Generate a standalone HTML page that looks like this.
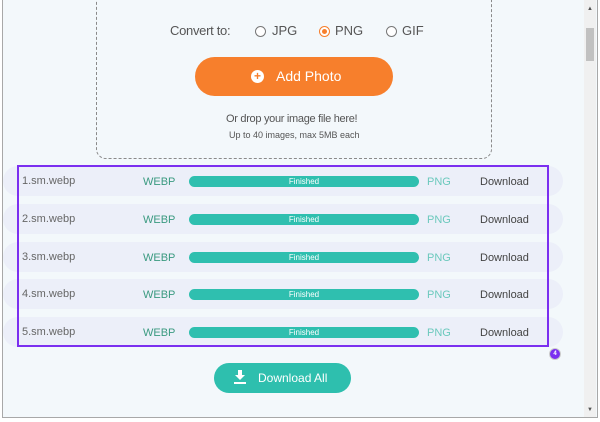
<!DOCTYPE html><html><head><style>
body{margin:0;width:600px;height:422px;background:#fff;font-family:"Liberation Sans",sans-serif;overflow:hidden;position:relative}
.frame{position:absolute;left:2px;top:0;width:594px;height:417px;border:1px solid #a8a8a8;border-top:none;background:#f3f8fb}
.sb{position:absolute;left:584px;top:0;width:12px;height:417px;background:#f0f0f0}
.thumb{position:absolute;left:586px;top:28px;width:8px;height:33px;background:#c1c1c1}
.drop{position:absolute;left:96px;top:-10px;width:394px;height:167px;border:1.5px dashed #8a8a8a;border-radius:10px}
.t{position:absolute;white-space:nowrap}
.radio{position:absolute;width:9px;height:9px;border:1px solid #777;border-radius:50%;background:#fff}
.add{position:absolute;left:195px;top:57px;width:198px;height:39px;border-radius:20px;background:#f77f2c;color:#fff;font-size:14px}
.row{position:absolute;left:3px;width:560px;height:30px;border-radius:15px;background:#eceff9}
.bar{position:absolute;left:189px;width:230px;height:11px;border-radius:6px;background:#2fbfaf;color:#fff;font-size:8px;text-align:center;line-height:11px}
.purple{position:absolute;left:17px;top:165px;width:528px;height:178px;border:2px solid #7b2ff0}
.dl{position:absolute;left:214px;top:363px;width:137px;height:30px;border-radius:15px;background:#2ebfae;color:#fff;font-size:12px}
.s{letter-spacing:-0.3px}
</style></head><body>
<div class="frame"></div>
<div class="sb"></div><div class="thumb"></div>
<div class="t" style="left:587px;top:6px;font-size:6px;color:#555">▲</div>
<div class="t" style="left:587px;top:407px;font-size:6px;color:#555">▼</div>
<div class="drop"></div>
<div class="t s" style="left:170px;top:23px;font-size:13px;color:#555">Convert to:</div>
<div class="radio" style="left:255px;top:26px"></div><div class="t" style="left:272px;top:23px;font-size:13px;color:#555">JPG</div>
<div class="radio" style="left:319px;top:26px;border-color:#f77f2c"></div><div style="position:absolute;left:322px;top:29px;width:5px;height:5px;border-radius:50%;background:#f77f2c"></div>
<div class="t" style="left:335px;top:23px;font-size:13px;color:#555">PNG</div>
<div class="radio" style="left:386px;top:26px"></div><div class="t" style="left:402px;top:23px;font-size:13px;color:#555">GIF</div>
<div class="add"><div style="position:absolute;left:56px;top:13px;width:13px;height:13px;border-radius:50%;background:#fff;color:#f77f2c;font-size:12px;line-height:13px;text-align:center;font-weight:bold">+</div><div class="t" style="left:81px;top:11px">Add Photo</div></div>
<div class="t s" style="left:226px;top:113px;font-size:11px;color:#555">Or drop your image file here!</div>
<div class="t" style="left:229px;top:130px;font-size:9px;color:#555">Up to 40 images, max 5MB each</div>

<div class="row" style="top:166px"></div><div class="row" style="top:204px"></div><div class="row" style="top:242px"></div><div class="row" style="top:279px"></div><div class="row" style="top:317px"></div>
<div class="purple"></div>

<div class="t" style="left:22px;top:175px;font-size:11px;color:#666">1.sm.webp</div><div class="t" style="left:143px;top:176px;font-size:11px;color:#3a9a80">WEBP</div><div class="bar" style="top:176px">Finished</div><div class="t" style="left:427px;top:176px;font-size:11px;color:#6cc9bd">PNG</div><div class="t" style="left:480px;top:176px;font-size:11px;color:#444">Download</div>
<div class="t" style="left:22px;top:213px;font-size:11px;color:#666">2.sm.webp</div><div class="t" style="left:143px;top:214px;font-size:11px;color:#3a9a80">WEBP</div><div class="bar" style="top:214px">Finished</div><div class="t" style="left:427px;top:214px;font-size:11px;color:#6cc9bd">PNG</div><div class="t" style="left:480px;top:214px;font-size:11px;color:#444">Download</div>
<div class="t" style="left:22px;top:251px;font-size:11px;color:#666">3.sm.webp</div><div class="t" style="left:143px;top:252px;font-size:11px;color:#3a9a80">WEBP</div><div class="bar" style="top:252px">Finished</div><div class="t" style="left:427px;top:252px;font-size:11px;color:#6cc9bd">PNG</div><div class="t" style="left:480px;top:252px;font-size:11px;color:#444">Download</div>
<div class="t" style="left:22px;top:288px;font-size:11px;color:#666">4.sm.webp</div><div class="t" style="left:143px;top:289px;font-size:11px;color:#3a9a80">WEBP</div><div class="bar" style="top:289px">Finished</div><div class="t" style="left:427px;top:289px;font-size:11px;color:#6cc9bd">PNG</div><div class="t" style="left:480px;top:289px;font-size:11px;color:#444">Download</div>
<div class="t" style="left:22px;top:326px;font-size:11px;color:#666">5.sm.webp</div><div class="t" style="left:143px;top:327px;font-size:11px;color:#3a9a80">WEBP</div><div class="bar" style="top:327px">Finished</div><div class="t" style="left:427px;top:327px;font-size:11px;color:#6cc9bd">PNG</div><div class="t" style="left:480px;top:327px;font-size:11px;color:#444">Download</div>

<div style="position:absolute;left:549px;top:348px;width:10px;height:10px;border-radius:50%;background:#7b2ff0;border:1px solid #ccc;color:#fff;font-size:6px;line-height:10px;text-align:center;font-weight:bold">4</div>
<div class="dl"><svg style="position:absolute;left:20px;top:7px" width="12" height="15" viewBox="0 0 12 15"><path d="M4 0h4v5h3L6 10 1 5h3z" fill="#fff"/><rect x="0" y="12" width="12" height="2" fill="#fff"/></svg><div class="t" style="left:44px;top:8px">Download All</div></div>
</body></html>
